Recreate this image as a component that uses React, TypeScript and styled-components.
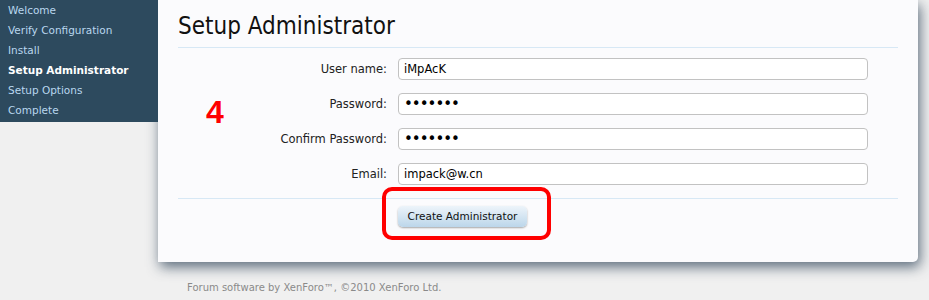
import styled, { createGlobalStyle } from 'styled-components';

const GlobalStyle = createGlobalStyle`
  html, body {
    margin: 0;
    padding: 0;
    background: #f0f0f0;
    font-family: "DejaVu Sans", Tahoma, sans-serif;
  }
`;

const Page = styled.div`
  display: flex;
  align-items: flex-start;
  width: 929px;
  height: 300px;
  overflow: hidden;
  position: relative;
`;

const Sidebar = styled.ul`
  list-style: none;
  margin: 0;
  padding: 1px 0 1px;
  width: 158px;
  background: #2d4a5e;
  position: relative;
  z-index: 2;
`;

const Step = styled.li<{ active?: boolean }>`
  height: 20px;
  line-height: 18px;
  padding-left: 8px;
  font-size: 10.5px;
  color: ${p => (p.active ? '#ffffff' : '#b9d7ee')};
  font-weight: ${p => (p.active ? 'bold' : 'normal')};
`;

const Column = styled.div`
  display: flex;
  flex-direction: column;
`;

const Panel = styled.div`
  position: relative;
  width: 760px;
  height: 262px;
  box-sizing: border-box;
  padding: 0 20px;
  background: #fbfbfd;
  border-bottom-right-radius: 5px;
  box-shadow: 2px 5px 13px rgba(55, 75, 95, 0.8);
  z-index: 1;
`;

const Title = styled.h1`
  margin: 0;
  padding-top: 12px;
  height: 35px;
  font-family: "DejaVu Sans Condensed", "DejaVu Sans", sans-serif;
  font-weight: normal;
  font-size: 24px;
  color: #111;
  border-bottom: 1px solid #d7e8f5;
`;

const Form = styled.div`
  display: grid;
  grid-template-columns: 209px 470px;
  column-gap: 11px;
  row-gap: 13px;
  padding: 10px 0 13px;
  border-bottom: 1px solid #d7e8f5;
  align-items: center;
`;

const Label = styled.label`
  text-align: right;
  font-size: 11.5px;
  color: #222;
`;

const Input = styled.input`
  box-sizing: border-box;
  height: 22px;
  width: 470px;
  margin: 0;
  padding: 0 5px;
  border: 1px solid #c2c2c2;
  border-radius: 4px;
  background: #fff;
  font-family: "DejaVu Sans", Tahoma, sans-serif;
  font-size: 11.5px;
  color: #000;
  outline: none;

  &[type='password'] {
    font-size: 15px;
    letter-spacing: -1px;
  }
`;

const Actions = styled.div`
  padding: 6px 0 0 220px;
`;

const Button = styled.button`
  height: 21px;
  width: 129px;
  padding: 0;
  border: none;
  border-radius: 5px;
  background: linear-gradient(to bottom, #edf4fa, #bcd6ea);
  box-shadow: 0 1px 2px rgba(0, 0, 0, 0.35);
  font-family: "DejaVu Sans", Tahoma, sans-serif;
  font-size: 10.5px;
  color: #111;
`;

const Marker = styled.div`
  position: absolute;
  left: 224px;
  top: 187px;
  width: 169px;
  height: 53px;
  box-sizing: border-box;
  border: 4px solid #ff0000;
  border-radius: 10px;
`;

const StepNumber = styled.div`
  position: absolute;
  left: 48px;
  top: 94px;
  font-family: "Liberation Sans", Arial, sans-serif;
  font-weight: bold;
  font-size: 32px;
  color: #ff0000;
`;

const Footer = styled.div`
  padding: 20px 0 0 29px;
  font-size: 10px;
  color: #8a8a8a;
`;

const steps = [
  'Welcome',
  'Verify Configuration',
  'Install',
  'Setup Administrator',
  'Setup Options',
  'Complete',
];

export default function App() {
  return (
    <>
      <GlobalStyle />
      <Page>
        <Sidebar>
          {steps.map(s => (
            <Step key={s} active={s === 'Setup Administrator'}>
              {s}
            </Step>
          ))}
        </Sidebar>
        <Column>
          <Panel>
            <Title>Setup Administrator</Title>
            <Form>
              <Label>User name:</Label>
              <Input type="text" defaultValue="iMpAcK" />
              <Label>Password:</Label>
              <Input type="password" defaultValue="1234567" />
              <Label>Confirm Password:</Label>
              <Input type="password" defaultValue="1234567" />
              <Label>Email:</Label>
              <Input type="text" defaultValue="impack@w.cn" />
            </Form>
            <Actions>
              <Button>Create Administrator</Button>
            </Actions>
            <StepNumber>4</StepNumber>
            <Marker />
          </Panel>
          <Footer>Forum software by XenForo™, ©2010 XenForo Ltd.</Footer>
        </Column>
      </Page>
    </>
  );
}
